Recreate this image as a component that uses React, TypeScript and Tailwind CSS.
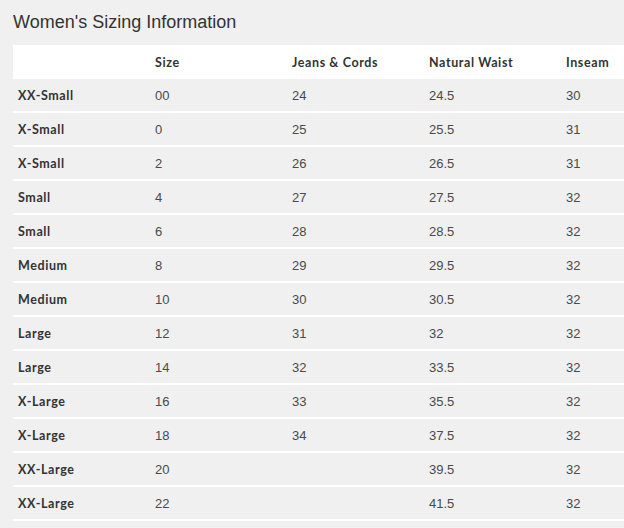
import React, {FC} from "react";

type Row = [string, string, string, string, string];

const rows: Row[] = [
    ["XX-Small", "00", "24", "24.5", "30"],
    ["X-Small", "0", "25", "25.5", "31"],
    ["X-Small", "2", "26", "26.5", "31"],
    ["Small", "4", "27", "27.5", "32"],
    ["Small", "6", "28", "28.5", "32"],
    ["Medium", "8", "29", "29.5", "32"],
    ["Medium", "10", "30", "30.5", "32"],
    ["Large", "12", "31", "32", "32"],
    ["Large", "14", "32", "33.5", "32"],
    ["X-Large", "16", "33", "35.5", "32"],
    ["X-Large", "18", "34", "37.5", "32"],
    ["XX-Large", "20", "", "39.5", "32"],
    ["XX-Large", "22", "", "41.5", "32"],
];

const headers = ["", "Size", "Jeans & Cords", "Natural Waist", "Inseam"];

const App: FC = () => {
    return <div className="min-h-[528px] bg-[#f0f0f0] overflow-hidden pl-[13px] pt-[10px]">
        <h1 className="text-[18px] leading-[24px] text-[#333] font-['Liberation_Sans',Arial,sans-serif] mb-[11px]">
            Women's Sizing Information
        </h1>
        <div className="w-[685px]">
            <div className="grid grid-cols-[137px_137px_137px_137px_137px] h-[34px] bg-white items-center">
                {headers.map((h, i) =>
                    <div key={i} className="pl-[5px] pt-[2px] text-[12.5px] font-bold text-[#333] font-['Lato','Noto_Sans',sans-serif] tracking-[0.6px]">
                        {h}
                    </div>
                )}
            </div>
            {rows.map((r, i) =>
                <div key={i} className="grid grid-cols-[137px_137px_137px_137px_137px] h-[34px] border-b-2 border-white items-center pt-[1px]">
                    {r.map((c, j) =>
                        <div key={j} className={j === 0
                            ? "pl-[5px] pt-[2px] text-[12.5px] font-bold text-[#333] font-['Lato','Noto_Sans',sans-serif] tracking-[0.6px]"
                            : "pl-[5px] text-[13px] text-[#4a4a4a] font-['Liberation_Sans',Arial,sans-serif]"}>
                            {c}
                        </div>
                    )}
                </div>
            )}
        </div>
    </div>
}

export default App
